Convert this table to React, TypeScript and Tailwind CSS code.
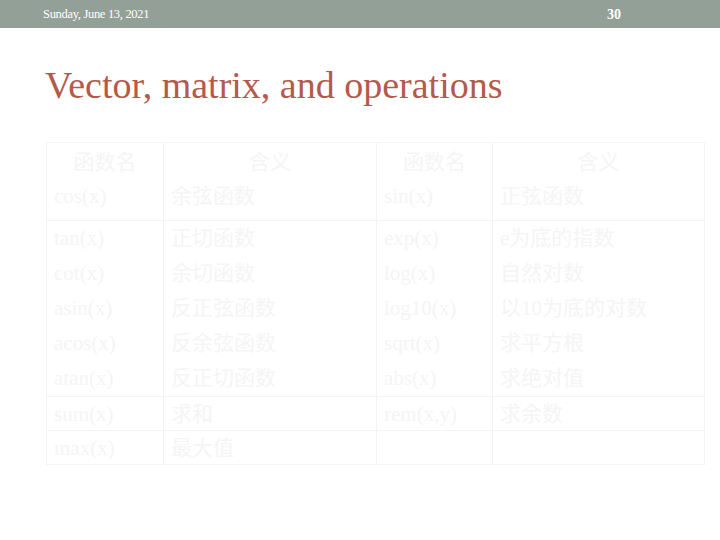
import React from 'react'

type Cell = { head?: string; lines: string[] }

// each row: four cells (函数名 | 含义 | 函数名 | 含义)
const rows: Cell[][] = [
  [
    { head: '函数名', lines: ['cos(x)'] },
    { head: '含义', lines: ['余弦函数'] },
    { head: '函数名', lines: ['sin(x)'] },
    { head: '含义', lines: ['正弦函数'] },
  ],
  [
    { lines: ['tan(x)', 'cot(x)', 'asin(x)', 'acos(x)', 'atan(x)'] },
    { lines: ['正切函数', '余切函数', '反正弦函数', '反余弦函数', '反正切函数'] },
    { lines: ['exp(x)', 'log(x)', 'log10(x)', 'sqrt(x)', 'abs(x)'] },
    { lines: ['e为底的指数', '自然对数', '以10为底的对数', '求平方根', '求绝对值'] },
  ],
  [
    { lines: ['sum(x)'] },
    { lines: ['求和'] },
    { lines: ['rem(x,y)'] },
    { lines: ['求余数'] },
  ],
  [
    { lines: ['max(x)'] },
    { lines: ['最大值'] },
    { lines: [] },
    { lines: [] },
  ],
]

const App: React.FC = () => {
  return (
    <div className="w-[720px] h-[540px] bg-white overflow-hidden" style={{ fontFamily: '"Liberation Serif", "Noto Sans CJK SC", serif' }}>
      {/* Header bar */}
      <div className="h-[28px] bg-[#93a097] flex items-center justify-between pl-[43px] pr-[99px] text-white">
        <span className="text-[12.5px] tracking-tight">Sunday, June 13, 2021</span>
        <span className="text-[14px] font-bold">30</span>
      </div>

      {/* Title */}
      <h1 className="mt-[38px] ml-[45px] text-[38px] leading-none text-[#b5594b]">
        Vector, matrix, and operations
      </h1>

      {/* Table (very faint) */}
      <div className="mt-[38px] ml-[46px] w-[659px] grid grid-cols-[117px_213px_116px_213px] border-t border-[#f6f6f6] text-[21px] text-[#f5f5f5]">
        {rows.map((row, ri) =>
          row.map((cell, ci) => (
            <div
              key={`${ri}-${ci}`}
              className={`border-b border-l border-[#f4f4f4] px-[7px] ${ci === 3 ? 'border-r' : ''} ${
                ri === 0 ? 'pt-[2px] h-[78px]' : ri === 1 ? 'h-[176px]' : 'h-[34px]'
              }`}
            >
              {cell.head && <div className="h-[34px] leading-[34px] text-center">{cell.head}</div>}
              {cell.lines.map((l, li) => (
                <div key={li} className={`${ri === 0 ? 'h-[34px] leading-[34px]' : 'h-[35px] leading-[35px]'} whitespace-nowrap`}>
                  {l}
                </div>
              ))}
            </div>
          ))
        )}
      </div>
    </div>
  )
}

export default App
